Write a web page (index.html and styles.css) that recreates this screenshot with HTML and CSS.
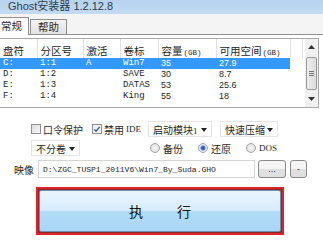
FILE: index.html
```html
<!DOCTYPE html>
<html lang="zh-CN">
<head>
    <meta charset="UTF-8">
    <title>Ghost安装器</title>
    <link rel="stylesheet" href="styles.css">
</head>
<body>
    <div class="window">
        <div class="titlebar">Ghost安装器 1.2.12.8</div>
        <div class="tabs">
            <div class="tab active">常规</div>
            <div class="tab">帮助</div>
        </div>
        <div class="panel">
            <div class="list">
                <table class="parts">
                    <thead>
                        <tr>
                            <th class="c1">盘符</th>
                            <th class="c2">分区号</th>
                            <th class="c3">激活</th>
                            <th class="c4">卷标</th>
                            <th class="c5">容量<small>(GB)</small></th>
                            <th class="c6">可用空间<small>(GB)</small></th>
                            <th class="c7"></th>
                        </tr>
                    </thead>
                    <tbody>
                        <tr class="sel"><td>C:</td><td>1:1</td><td>A</td><td>Win7</td><td>35</td><td>27.9</td><td class="blank"></td></tr>
                        <tr><td>D:</td><td>1:2</td><td></td><td>SAVE</td><td>30</td><td>8.7</td><td class="blank"></td></tr>
                        <tr><td>E:</td><td>1:3</td><td></td><td>DATAS</td><td>53</td><td>25.6</td><td class="blank"></td></tr>
                        <tr><td>F:</td><td>1:4</td><td></td><td>King</td><td>55</td><td>18</td><td class="blank"></td></tr>
                    </tbody>
                </table>
                <div class="scrollbar">
                    <div class="sb-btn">
                        <svg width="7" height="4" viewBox="0 0 7 4"><path d="M0 4 L3.5 0 L7 4 Z" fill="#333"/></svg>
                    </div>
                    <div class="sb-thumb">
                        <svg width="5" height="5" viewBox="0 0 5 5"><path d="M0 0.5 H5 M0 2.5 H5 M0 4.5 H5" stroke="#777" stroke-width="1"/></svg>
                    </div>
                    <div class="sb-btn sb-down">
                        <svg width="7" height="4" viewBox="0 0 7 4"><path d="M0 0 L3.5 4 L7 0 Z" fill="#333"/></svg>
                    </div>
                </div>
            </div>

            <div class="row row-opts">
                <label class="check"><span class="box"></span>口令保护</label>
                <label class="check ide"><span class="box on"><svg width="9" height="9" viewBox="0 0 9 9"><path d="M1.5 4.5 L3.5 6.5 L7.5 1.5" fill="none" stroke="#3a5fa8" stroke-width="1.6"/></svg></span>禁用<span class="latin">IDE</span></label>
                <div class="combo boot">启动模块<span class="latin">1</span><span class="arrow"></span></div>
                <div class="combo fast">快速压缩<span class="arrow"></span></div>
            </div>

            <div class="row row-mode">
                <div class="combo split">不分卷<span class="arrow"></span></div>
                <label class="radio backup"><span class="dot"></span>备份</label>
                <label class="radio restore"><span class="dot on"></span>还原</label>
                <label class="radio"><span class="dot"></span><span class="latin">DOS</span></label>
            </div>

            <div class="row row-image">
                <span class="img-label">映像</span>
                <div class="path">D:\ZGC_TUSP1_2011V6\Win7_By_Suda.GHO</div>
                <button class="small-btn dots">...</button>
                <button class="small-btn minus">-</button>
            </div>

            <div class="run-wrap">
                <button class="run">执<span class="gap"></span>行</button>
            </div>
        </div>
    </div>
</body>
</html>
```

FILE: styles.css
```css
*{
    padding: 0;
    margin: 0;
    box-sizing: border-box;
}
body{
    width: 323px;
    height: 244px;
    overflow: hidden;
    background: #f4f4f4;
    font-family: "Noto Sans CJK SC", "Liberation Sans", sans-serif;
    font-size: 10.5px;
    color: #262626;
}
.window{
    height: 244px;
    display: flex;
    flex-direction: column;
}
.titlebar{
    height: 14px;
    line-height: 12px;
    overflow: hidden;
    padding-left: 8px;
    background: linear-gradient(#b6d2ee, #c3dcf3);
    font-family: "Liberation Sans", "Noto Sans CJK SC", sans-serif;
    font-size: 11px;
    color: #2b3a4c;
}
.tabs{
    height: 20px;
    display: flex;
    align-items: flex-end;
}
.tab{
    height: 15px;
    line-height: 14px;
    padding: 0 7px;
    margin-left: 1px;
    border: 1px solid #8e8f8f;
    border-bottom: none;
    background: linear-gradient(#f3f3f3, #e3e3e3);
}
.tab.active{
    height: 18px;
    line-height: 16px;
    margin-left: -6px;
    padding: 0 6px;
    background: #fff;
    position: relative;
    top: 1px;
    z-index: 1;
}
.panel{
    flex: 1;
    background: #fff;
    border-top: 1px solid #8e8f8f;
    padding-top: 3px;
}

/* partition list */
.list{
    width: 319px;
    height: 70px;
    border: 1px solid #a8a8a8;
    border-left: none;
    display: flex;
    background: #fff;
}
.parts{
    width: 302px;
    border-collapse: collapse;
    table-layout: fixed;
    align-self: flex-start;
}
.parts th{
    height: 19px;
    font-weight: normal;
    text-align: left;
    padding-left: 3px;
    padding-top: 3px;
    border-right: 1px solid #e2e2e2;
    white-space: nowrap;
    overflow: hidden;
}
.parts th small{
    font-family: "Liberation Mono", monospace;
    font-size: 7.5px;
    margin-left: 1px;
}
.parts td{
    height: 11px;
    line-height: 11px;
    padding-left: 3px;
    font-family: "Liberation Mono", monospace;
    font-size: 9px;
    white-space: nowrap;
}
.parts td:nth-child(5), .parts td:nth-child(6){
    font-family: "Liberation Sans", sans-serif;
}
.parts tr.sel td{
    background: #3399ff;
    color: #fff;
}
.parts tr.sel td.blank{
    background: #fff;
}
.c1{ width: 37px; }
.c2{ width: 46px; }
.c3{ width: 37px; }
.c4{ width: 38px; }
.c5{ width: 58px; }
.c6{ width: 74px; }
.c7{ width: 12px; }

.scrollbar{
    width: 14px;
    margin-left: 2px;
    display: flex;
    flex-direction: column;
    background: #f0f0f0;
}
.sb-btn{
    height: 16px;
    display: flex;
    align-items: center;
    justify-content: center;
}
.sb-thumb{
    height: 33px;
    margin: 2px 1px 0;
    border: 1px solid #9a9a9a;
    border-radius: 2px;
    background: linear-gradient(90deg, #eee, #dcdcdc);
    display: flex;
    align-items: center;
    justify-content: center;
}
.sb-down{
    margin-top: auto;
}

/* option rows */
.row{
    display: flex;
    align-items: center;
    font-size: 10px;
}
.latin{
    font-family: "Liberation Serif", serif;
    font-size: 9px;
}
.row-opts{
    height: 16px;
    margin-top: 13px;
    padding-left: 31px;
}
.check{
    display: flex;
    align-items: center;
    gap: 2px;
    margin-right: 9px;
}
.box{
    width: 10px;
    height: 10px;
    border: 1px solid #8f8f8f;
    background: linear-gradient(135deg, #dcdcdc, #f8f8f8);
    display: flex;
    align-items: center;
    justify-content: center;
}
.box.on{
    background: linear-gradient(135deg, #e6ecf4, #fbfcfe);
}
.ide{
    margin-right: 7px;
}
.combo{
    height: 16px;
    line-height: 15px;
    padding-left: 4px;
    border: 1px solid #e4e4e4;
    position: relative;
    white-space: nowrap;
}
.arrow{
    position: absolute;
    right: 4px;
    top: 6px;
    border-left: 3px solid transparent;
    border-right: 3px solid transparent;
    border-top: 4px solid #222;
}
.boot{
    width: 64px;
}
.fast{
    width: 58px;
    margin-left: 8px;
}
.row-mode{
    height: 16px;
    margin-top: 3px;
    padding-left: 31px;
}
.split{
    width: 49px;
}
.radio{
    display: flex;
    align-items: center;
    gap: 3px;
}
.backup{
    margin-left: 70px;
}
.restore{
    margin-left: 15px;
}
.restore + .radio{
    margin-left: 15px;
}
.dot{
    width: 10px;
    height: 10px;
    border-radius: 50%;
    border: 1px solid #a4a4a4;
    background: radial-gradient(#f6f6f6, #d8d8d8);
}
.dot.on{
    background: radial-gradient(circle, #2b4f9a 0, #4a77c6 2px, #dfe6f2 3px, #eef2f8 5px);
}
.row-image{
    height: 18px;
    margin-top: 4px;
    padding-left: 14px;
}
.img-label{
    width: 24px;
}
.path{
    width: 217px;
    height: 18px;
    line-height: 17px;
    padding-left: 4px;
    border: 1px solid #d4d4d4;
    font-family: "Liberation Mono", monospace;
    font-size: 8px;
    white-space: nowrap;
    overflow: hidden;
}
.small-btn{
    height: 18px;
    border: 1px solid #8a8a8a;
    border-radius: 3px;
    background: linear-gradient(#f4f4f4 50%, #e0e0e0 50%);
    font-family: "Liberation Sans", sans-serif;
    font-size: 9px;
    color: #333;
}
.dots{
    width: 28px;
    margin-left: 3px;
}
.minus{
    width: 17px;
    margin-left: 4px;
}

/* execute button */
.run-wrap{
    width: 248px;
    height: 48px;
    margin: 9px 0 0 36px;
    border: 2px solid #dc2229;
    padding: 1px;
    background: #8c2a2a;
}
.run{
    width: 100%;
    height: 100%;
    border: 1px solid #6f8fae;
    border-radius: 2px;
    background: linear-gradient(#eaf5fd, #d7ecfb 48%, #b2dcf7 52%, #a9d6f5);
    font-family: "Noto Sans CJK SC", sans-serif;
    font-size: 14px;
    color: #111;
    display: flex;
    align-items: center;
    justify-content: center;
}
.gap{
    width: 34px;
}
```
